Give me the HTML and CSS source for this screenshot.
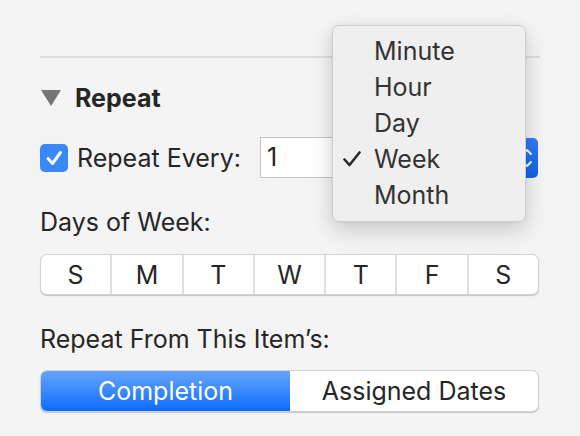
FILE: index.html
```html
<!DOCTYPE html>
<html>
<head>
<meta charset="utf-8">
<link rel="stylesheet" href="styles.css">
</head>
<body>
<div class="panel">
  <div class="divider"></div>
  <div class="section-head">
    <span class="disclosure"></span>
    <span class="section-title">Repeat</span>
  </div>
  <div class="repeat-row">
    <span class="checkbox">
      <svg width="28" height="28" viewBox="0 0 28 28"><path d="M8 14.5 L12.5 19.5 L20.5 8.5" fill="none" stroke="#fff" stroke-width="3" stroke-linecap="round" stroke-linejoin="round"/></svg>
    </span>
    <span class="label">Repeat Every:</span>
    <span class="field">1</span>
    <span class="stepper">
      <svg width="22" height="40" viewBox="0 0 22 40"><path d="M7 16 L11 12 L15 16 M7 24 L11 28 L15 24" fill="none" stroke="#fff" stroke-width="2" stroke-linecap="round" stroke-linejoin="round"/></svg>
    </span>
  </div>
  <div class="label days-label">Days of Week:</div>
  <div class="segmented days">
    <span class="seg">S</span>
    <span class="seg">M</span>
    <span class="seg">T</span>
    <span class="seg">W</span>
    <span class="seg">T</span>
    <span class="seg">F</span>
    <span class="seg">S</span>
  </div>
  <div class="label from-label">Repeat From This Item’s:</div>
  <div class="segmented from">
    <span class="seg selected">Completion</span>
    <span class="seg">Assigned Dates</span>
  </div>
</div>
<div class="menu">
  <div class="menu-item">Minute</div>
  <div class="menu-item">Hour</div>
  <div class="menu-item">Day</div>
  <div class="menu-item checked">
    <svg class="tick" width="18" height="16" viewBox="0 0 18 16"><path d="M1.5 8.5 L6.5 14 L16.5 1.5" fill="none" stroke="#2a2a2a" stroke-width="2.6" stroke-linecap="round" stroke-linejoin="round"/></svg>
    Week
  </div>
  <div class="menu-item">Month</div>
</div>
</body>
</html>
```
FILE: styles.css
```css
html, body {
  margin: 0;
  padding: 0;
  background: #f4f4f4;
  font-family: Inter, "Liberation Sans", sans-serif;
  color: #262626;
}
body {
  width: 580px;
  height: 436px;
  overflow: hidden;
  position: relative;
}
.panel {
  padding: 56px 40px 0 40px;
  width: 500px;
}
.divider {
  height: 2px;
  background: #dedede;
}
.section-head {
  display: flex;
  align-items: center;
  margin-top: 25px;
  height: 30px;
}
.disclosure {
  width: 0;
  height: 0;
  border-left: 10px solid transparent;
  border-right: 10px solid transparent;
  border-top: 16px solid #767676;
  margin-left: 1px;
  margin-right: 14px;
}
.section-title {
  font-weight: 700;
  font-size: 25px;
  line-height: 30px;
}
.label {
  font-size: 25px;
  line-height: 30px;
}
.repeat-row {
  display: flex;
  align-items: center;
  margin-top: 24px;
  height: 41px;
}
.checkbox {
  width: 28px;
  height: 28px;
  border-radius: 5px;
  background: #3a87f7;
  display: flex;
  margin-right: 9px;
}
.field {
  margin-left: 19px;
  width: 254px;
  height: 41px;
  border: 1px solid #c4c4c4;
  background: #fff;
  font-size: 25px;
  line-height: 39px;
  padding-left: 6px;
  box-sizing: border-box;
}
.stepper {
  margin-left: 2px;
  width: 22px;
  height: 40px;
  border-radius: 5px;
  background: linear-gradient(#2f7df7, #1262e6);
  display: flex;
}
.days-label {
  margin-top: 29px;
}
.segmented {
  display: flex;
  margin-left: 1px;
  width: 497px;
  height: 39px;
  border-radius: 6px;
  background: #fff;
  box-shadow: 0 0 0 1px #d2d2d2, 0 1px 1px 1px #c4c4c4;
  box-sizing: border-box;
  overflow: hidden;
}
.days {
  margin-top: 18px;
}
.days .seg {
  flex: 1;
  display: flex;
  align-items: center;
  justify-content: center;
  font-size: 25px;
  border-left: 2px solid #e0e0e0;
}
.days .seg:first-child {
  border-left: none;
}
.from-label {
  margin-top: 30px;
}
.from {
  margin-top: 17px;
  height: 40px;
}
.from .seg {
  display: flex;
  align-items: center;
  justify-content: center;
  font-size: 25px;
  flex: 1;
}
.from .seg.selected {
  flex: 0 0 249px;
  color: #fff;
  background: linear-gradient(#66a5fa, #0d6cfe);
}
.menu {
  position: absolute;
  left: 332px;
  top: 25px;
  width: 194px;
  height: 197px;
  box-sizing: border-box;
  padding-top: 7px;
  border-radius: 7px;
  background: #efefef;
  border: 1px solid #cfcfcf;
  box-shadow: 0 8px 22px rgba(0,0,0,0.18), 0 0 4px rgba(0,0,0,0.06);
}
.menu-item {
  position: relative;
  height: 36px;
  line-height: 36px;
  padding-left: 41px;
  font-size: 25px;
  color: #333;
}
.tick {
  position: absolute;
  left: 10px;
  top: 10px;
}
```
